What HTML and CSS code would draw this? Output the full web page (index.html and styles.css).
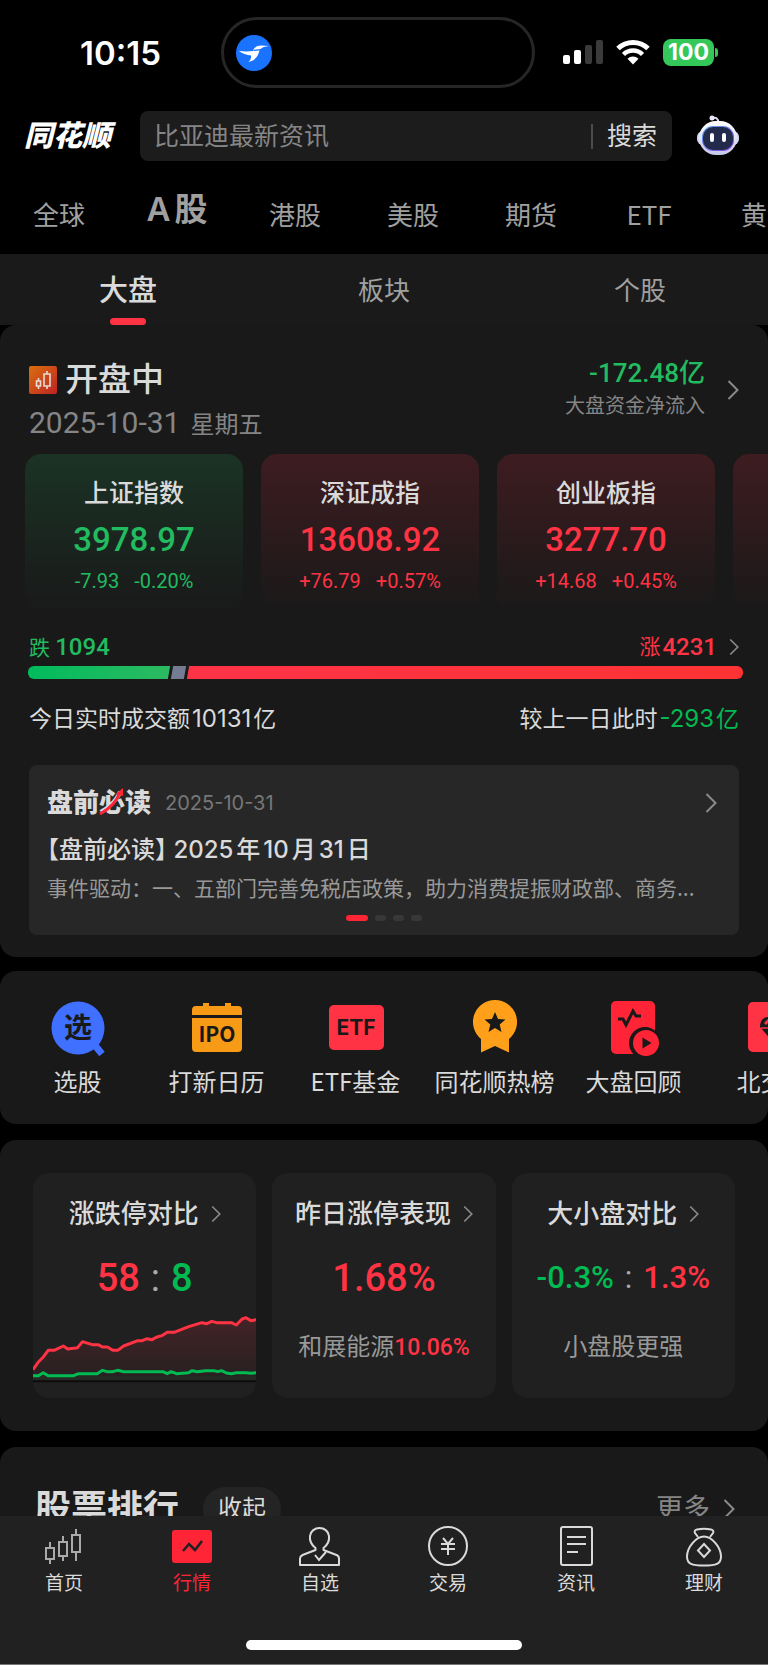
FILE: index.html
```
<!DOCTYPE html>
<html lang="zh-CN">
<head>
  <meta charset="UTF-8" />
  <meta name="viewport" content="width=device-width, initial-scale=1.0" />
  <title>同花顺 - 行情</title>
  <link rel="stylesheet" href="styles.css">
</head>
<body>
  <!-- shared chevron -->
  <svg class="defs" width="0" height="0" aria-hidden="true">
    <symbol id="chevron" viewBox="0 0 12 20">
      <path d="M1.5 1l9 9-9 9" fill="none" stroke="currentColor" stroke-width="2" />
    </symbol>
  </svg>

  <div class="app">
    <div class="status-bar">
      <div class="time">10:15</div>
      <div class="island">
        <svg width="36" height="36" viewBox="0 0 36 36">
          <circle cx="18" cy="18" r="18" fill="#1a73ff" />
          <path d="M3 16c5 .6 10 .6 14 0 1-3.500 4-5.500 8-5.500l8 .4c-4 .7-7 1.200-8.500 3.100l-6.500.8-.6 1.200 6.100-.4c-1.500 6-4 9.500-11 11.400 2-2 3-4 2.500-6.400C11 20 6 18.500 3 16z" fill="#fff" />
        </svg>
      </div>
      <div class="status-icons">
        <svg width="40" height="26" viewBox="0 0 40 26">
          <rect x="0" y="16" width="7" height="9" rx="2" fill="#fff" />
          <rect x="11" y="11" width="7" height="14" rx="2" fill="#fff" />
          <rect x="22" y="6" width="7" height="19" rx="2" fill="#3a3a3a" />
          <rect x="33" y="1" width="7" height="24" rx="2" fill="#3a3a3a" />
        </svg>
        <svg width="34" height="26" viewBox="0 0 34 26">
          <path d="M2 9.500a21.500 21.500 0 0 1 30 0" fill="none" stroke="#fff" stroke-width="5" />
          <path d="M7.500 15.500a13.500 13.500 0 0 1 19 0" fill="none" stroke="#fff" stroke-width="4.500" />
          <path d="M17 25.500l-5.500-5.700a8 8 0 0 1 11 0z" fill="#fff" />
        </svg>
        <div class="battery"><span>100</span></div>
      </div>
    </div>

    <header class="header">
      <h1 class="logo">同花顺</h1>
      <form class="search-box">
        <input type="text" placeholder="比亚迪最新资讯" aria-label="搜索" />
        <button type="button">搜索</button>
      </form>
      <button class="robot" aria-label="AI助手">
        <svg width="44" height="42" viewBox="0 0 44 42">
          <defs>
            <linearGradient id="head" x1="0" y1="0" x2="0" y2="1">
              <stop offset="0" stop-color="#fff" />
              <stop offset="1" stop-color="#c5c7ea" />
            </linearGradient>
            <linearGradient id="face" x1="0" y1="0" x2="1" y2="1">
              <stop offset="0" stop-color="#57a8e8" />
              <stop offset="1" stop-color="#8a3fe0" />
            </linearGradient>
          </defs>
          <path d="M16 3c4-1 6 0 6.500 5" fill="none" stroke="#dcdcf2" stroke-width="2" />
          <circle cx="16" cy="3" r="2.500" fill="#e8e8fa" />
          <rect x="1" y="16" width="42" height="14" rx="6" fill="#d7d8f2" />
          <rect x="3" y="6" width="38" height="34" rx="17" fill="url(#head)" />
          <rect x="6" y="11" width="32" height="25" rx="11" fill="url(#face)" />
          <rect x="7" y="12" width="30" height="23" rx="10" fill="#232b4d" />
          <rect x="14" y="18" width="4" height="9" rx="2" fill="#fff" />
          <rect x="26" y="18" width="4" height="9" rx="2" fill="#fff" />
        </svg>
      </button>
    </header>

    <nav class="market-tabs">
      <a href="#">全球</a>
      <a href="#" class="active">A股</a>
      <a href="#">港股</a>
      <a href="#">美股</a>
      <a href="#">期货</a>
      <a href="#">ETF</a>
      <a href="#">黄金</a>
    </nav>

    <main class="content">
      <nav class="sub-tabs">
        <a href="#" class="active">大盘</a>
        <a href="#">板块</a>
        <a href="#">个股</a>
      </nav>

      <section class="panel overview">
        <div class="overview-head">
          <div>
            <div class="market-state">
              <svg width="28" height="28" viewBox="0 0 28 28">
                <defs>
                  <linearGradient id="state" x1="0" y1="0" x2="1" y2="1">
                    <stop offset="0" stop-color="#d9700f" />
                    <stop offset="1" stop-color="#bf2323" />
                  </linearGradient>
                </defs>
                <rect width="28" height="28" rx="2" fill="url(#state)" />
                <path d="M9.500 12v3M9.500 20v3M7.500 15h4v5h-4zM18 5v3M18 20v3M15 8h6v12h-6z" fill="none" stroke="#e8dcd6" stroke-width="1.600" />
              </svg>
              <h2>开盘中</h2>
            </div>
            <div class="date"><span class="num">2025-10-31</span> 星期五</div>
          </div>
          <a href="#" class="flow">
            <span class="flow-text">
              <span class="flow-value down">-172.48亿</span>
              <span class="flow-label">大盘资金净流入</span>
            </span>
            <svg class="chevron"><use href="#chevron" /></svg>
          </a>
        </div>

        <div class="index-list">
          <a href="#" class="index-card down">
            <span class="index-name">上证指数</span>
            <span class="index-value">3978.97</span>
            <span class="index-change"><span>-7.93</span><span>-0.20%</span></span>
          </a>
          <a href="#" class="index-card up">
            <span class="index-name">深证成指</span>
            <span class="index-value">13608.92</span>
            <span class="index-change"><span>+76.79</span><span>+0.57%</span></span>
          </a>
          <a href="#" class="index-card up">
            <span class="index-name">创业板指</span>
            <span class="index-value">3277.70</span>
            <span class="index-change"><span>+14.68</span><span>+0.45%</span></span>
          </a>
          <a href="#" class="index-card up" aria-label="更多指数"></a>
        </div>

        <div class="breadth">
          <span class="down">跌 <b>1094</b></span>
          <a href="#" class="up">涨 <b>4231</b><svg class="chevron small"><use href="#chevron" /></svg></a>
        </div>
        <div class="breadth-bar">
          <span class="bar-down" style="flex-grow: 1094"></span>
          <span class="bar-flat" style="flex-grow: 100"></span>
          <span class="bar-up" style="flex-grow: 4231"></span>
        </div>
        <div class="turnover">
          <span>今日实时成交额<span class="latin">10131</span>亿</span>
          <span>较上一日此时<span class="down2"><span class="latin">-293</span>亿</span></span>
        </div>

        <article class="news">
          <div class="news-head">
            <h3 class="news-logo">盘前必读
              <svg width="28" height="28" viewBox="0 0 28 28">
                <path d="M1 26C10 21 18 13 21 4" fill="none" stroke="#ff2436" stroke-width="3" />
                <path d="M17 6l7-6v8z" fill="#ff2436" />
              </svg>
            </h3>
            <time class="latin">2025-10-31</time>
            <svg class="chevron"><use href="#chevron" /></svg>
          </div>
          <a href="#" class="news-title">【盘前必读】 2025年10月31日</a>
          <p class="news-desc">事件驱动：一、五部门完善免税店政策，助力消费提振财政部、商务...</p>
          <div class="dots"><i class="on"></i><i></i><i></i><i></i></div>
        </article>
      </section>

      <section class="panel shortcuts">
        <a href="#">
          <svg width="56" height="56" viewBox="0 0 56 56">
            <path d="M43 43l9 11" stroke="#3f70ff" stroke-width="7" />
            <circle cx="28" cy="28" r="26.500" fill="#3f70ff" />
            <text x="28" y="38" font-size="28" class="icon-text">选</text>
          </svg>
          选股
        </a>
        <a href="#">
          <svg width="56" height="56" viewBox="0 0 56 56">
            <path d="M7 6h7V3h6v3h16V3h6v3h7a4 4 0 0 1 4 4v5H3v-5a4 4 0 0 1 4-4zM3 18h50v30a4 4 0 0 1-4 4H7a4 4 0 0 1-4-4z" fill="#f79a16" />
            <text x="28" y="42" font-size="21" class="icon-text">IPO</text>
          </svg>
          打新日历
        </a>
        <a href="#">
          <svg width="56" height="56" viewBox="0 0 56 56">
            <rect x="1" y="5" width="55" height="45" rx="5" fill="#ff3344" />
            <text x="28" y="35" font-size="21" class="icon-text latin">ETF</text>
          </svg>
          ETF基金
        </a>
        <a href="#">
          <svg width="56" height="56" viewBox="0 0 56 56">
            <path d="M28 0a22 22 0 0 1 14 39v13.500L28 46l-14 6.500V39A22 22 0 0 1 28 0z" fill="#ff9f1a" />
            <path d="M28 12l3 7 7.500.6-5.800 5 1.800 7.400-6.500-4-6.500 4 1.800-7.400-5.800-5L25 19z" fill="#191919" />
          </svg>
          同花顺热榜
        </a>
        <a href="#">
          <svg width="56" height="56" viewBox="0 0 56 56">
            <rect x="5" y="1" width="44" height="53" rx="5" fill="#ff2436" />
            <path d="M12 19h5l3 6 7-14 3 5h5" fill="none" stroke="#191919" stroke-width="3" />
            <circle cx="39" cy="43" r="16" fill="#191919" />
            <circle cx="40" cy="43" r="13" fill="#ff2436" />
            <path d="M36.500 37.500l9 5.500-9 5.500z" fill="#191919" />
          </svg>
          大盘回顾
        </a>
        <a href="#">
          <svg width="56" height="56" viewBox="0 0 56 56">
            <rect x="3" y="2" width="50" height="50" rx="5" fill="#ff3344" />
            <path d="M15 27c0-6 3-10 8-10h10c5 0 8 4 8 10L28 42z" fill="#191919" />
            <path d="M16 28h24" stroke="#ff3344" stroke-width="1.500" />
            <path d="M20 24l4-4" stroke="#ff3344" stroke-width="3" />
          </svg>
          北交所
        </a>
      </section>

      <section class="panel stats">
        <a href="#" class="stat">
          <span class="stat-title">涨跌停对比<svg class="chevron small"><use href="#chevron" /></svg></span>
          <span class="stat-value"><b class="up">58</b><i>:</i><b class="down2">8</b></span>
          <svg class="chart" viewBox="67 520 456 213" preserveAspectRatio="none">
            <defs>
              <linearGradient id="area" x1="0" y1="0" x2="0" y2="1">
                <stop offset="0" stop-color="#ff3344" stop-opacity="0.160" />
                <stop offset="1" stop-color="#ff3344" stop-opacity="0.030" />
              </linearGradient>
            </defs>
            <path d="M67 693L78 670 88 655 98 635H110L129 622 138 631 158 627 168 609 188 618H200L209 625H219L230 635H240L252 622 281 606H290L300 600 310 603 320 595 330 591 341 581H355L385 564 412 552 422 555 432 548 442 552H472L482 559 494 541 502 537 512 546 523 543V726H67z" fill="url(#area)" />
            <path d="M67 711H523V726H67z" fill="#00c853" fill-opacity="0.060" />
            <path d="M67 728H523" stroke="#0c0c0c" stroke-width="2" vector-effect="non-scaling-stroke" />
            <path d="M67 693L78 670 88 655 98 635H110L129 622 138 631 158 627 168 609 188 618H200L209 625H219L230 635H240L252 622 281 606H290L300 600 310 603 320 595 330 591 341 581H355L385 564 412 552 422 555 432 548 442 552H472L482 559 494 541 502 537 512 546 523 543" class="line" stroke="#ff3344" />
            <path d="M67 711H78L88 702 98 711H150L160 705H198L209 695 218 699H230L240 695 252 699H332L341 705 349 699 360 705 385 702 392 696 402 699 420 696H436L444 699 452 696 462 703 472 705 482 702H502L512 704 523 702" class="line" stroke="#00bb52" />
          </svg>
        </a>
        <a href="#" class="stat">
          <span class="stat-title">昨日涨停表现<svg class="chevron small"><use href="#chevron" /></svg></span>
          <span class="stat-value"><b class="up">1.68%</b></span>
          <span class="stat-note">和展能源<b class="up">10.06%</b></span>
        </a>
        <a href="#" class="stat">
          <span class="stat-title">大小盘对比<svg class="chevron small"><use href="#chevron" /></svg></span>
          <span class="stat-value compact"><b class="down2">-0.3%</b><i>:</i><b class="up">1.3%</b></span>
          <span class="stat-note">小盘股更强</span>
        </a>
      </section>

      <section class="panel ranking">
        <h2>股票排行</h2>
        <button class="fold">收起</button>
        <a href="#">更多<svg class="chevron"><use href="#chevron" /></svg></a>
      </section>
    </main>

    <nav class="bottom-nav">
      <div class="nav-items">
        <a href="#">
          <svg width="42" height="42" viewBox="0 0 42 42">
            <path d="M7 17v6M7 34v5M3 23h8v11H3zM20 11v6M20 31v5M16 17h8v14h-8zM33 4v6M33 27v9M29 10h8v17h-8z" stroke="#aaa" stroke-width="2" />
          </svg>
          首页
        </a>
        <a href="#" class="active">
          <svg width="42" height="42" viewBox="0 0 42 42">
            <rect x="1" y="5" width="40" height="33" rx="3" fill="#ff2436" />
            <path d="M12 26l6-7 6 6 7-9" stroke="#212121" stroke-width="2.500" />
          </svg>
          行情
        </a>
        <a href="#">
          <svg width="42" height="42" viewBox="0 0 42 42">
            <path d="M16.500 23c-5-4-6-8-5.500-12C11.500 6 16 3 20.500 3S29.500 6 30 11c.5 4-.5 8-5.500 12v2l13 5c2 .8 2.500 2 2.500 3.500V40H1v-6.500C1 32 2 30.800 3.500 30l13-5z" stroke="#dadada" stroke-width="2" stroke-linejoin="round" />
            <path d="M16 30l4 5 7-8" stroke="#dadada" stroke-width="2" />
          </svg>
          自选
        </a>
        <a href="#">
          <svg width="42" height="42" viewBox="0 0 42 42">
            <circle cx="21" cy="21" r="19" stroke="#dadada" stroke-width="2" />
            <path d="M16 13l5 6 5-6M21 19v11M14 19h14M14 24h14" stroke="#dadada" stroke-width="2" />
          </svg>
          交易
        </a>
        <a href="#">
          <svg width="42" height="42" viewBox="0 0 42 42">
            <rect x="6" y="2" width="31" height="38" rx="2" stroke="#dadada" stroke-width="2" />
            <path d="M12 12h19M12 19h19M12 27h11" stroke="#dadada" stroke-width="2" />
          </svg>
          资讯
        </a>
        <a href="#">
          <svg width="42" height="42" viewBox="0 0 42 42">
            <path d="M15 12l-3-4c-1-2 0-3 2-3.500 5-1 9-1 14 0 2 .5 3 1.500 2 3.500l-3 4" stroke="#dadada" stroke-width="2" />
            <path d="M21 11.500c8 0 17 11 17 20C38 39 33 40.500 21 40.500S4 39 4 31.500c0-9 9-20 17-20z" stroke="#dadada" stroke-width="2" />
            <path d="M21 19l6 6.500-6 6.500-6-6.500z" stroke="#dadada" stroke-width="2" />
          </svg>
          理财
        </a>
      </div>
      <div class="home-indicator"></div>
    </nav>
  </div>
</body>
</html>
```
FILE: styles.css
```
* {
  box-sizing: border-box;
}
body {
  margin: 0;
  background: #000;
  color: #dadada;
  font-family: Roboto, "Noto Sans CJK SC", sans-serif;
}
h1, h2, h3, p {
  margin: 0;
}
a {
  color: inherit;
  text-decoration: none;
}
button {
  padding: 0;
  border: none;
  background: none;
  color: inherit;
  font-family: inherit;
  cursor: pointer;
}
b {
  font-weight: 500;
}
i {
  font-style: normal;
}
.defs {
  position: absolute;
}
.latin {
  font-family: Inter, "Noto Sans CJK SC", sans-serif;
}
.up {
  color: #ff3344;
}
.down {
  color: #22bb60;
}
.down2 {
  color: #00bb52;
}
.chevron {
  width: 12px;
  height: 20px;
  flex: none;
  color: #8a8a8a;
}
.chevron.small {
  width: 10px;
  height: 18px;
}
.app {
  display: flex;
  flex-direction: column;
  height: 100vh;
  overflow: hidden;
}

/* status bar */
.status-bar {
  display: flex;
  flex: none;
  height: 111px;
  padding-top: 17px;
}
.time {
  width: 221px;
  padding-left: 20px;
  line-height: 72px;
  text-align: center;
  font-family: Inter, sans-serif;
  font-size: 33px;
  font-weight: 600;
  color: #fff;
}
.island {
  display: flex;
  align-items: center;
  width: 314px;
  height: 71px;
  padding-left: 12px;
  border: 3px solid #262626;
  border-radius: 36px;
}
.status-icons {
  display: flex;
  align-items: center;
  gap: 13px;
  height: 70px;
  margin-left: 28px;
}
.battery {
  position: relative;
  width: 51px;
  height: 27px;
  border-radius: 8px;
  background: #34c759;
  color: #fff;
  font-family: Inter, sans-serif;
  font-size: 23px;
  font-weight: 700;
  line-height: 27px;
  text-align: center;
}
.battery::after {
  content: "";
  position: absolute;
  right: -4px;
  top: 9px;
  width: 3px;
  height: 9px;
  border-radius: 0 3px 3px 0;
  background: #34c759;
}

/* header */
.header {
  display: flex;
  flex: none;
  align-items: center;
  height: 50px;
  padding: 0 28px 0 24px;
}
.logo {
  width: 116px;
  font-size: 29px;
  font-weight: 900;
  font-style: italic;
  line-height: 50px;
  color: #fff;
}
.search-box {
  display: flex;
  flex: 1;
  align-items: center;
  height: 50px;
  margin-right: 24px;
  padding: 0 15px 0 14px;
  border-radius: 8px;
  background: #1c1c1c;
}
.search-box input {
  flex: 1;
  min-width: 0;
  padding: 0;
  border: none;
  outline: none;
  background: none;
  color: #dadada;
  font-family: inherit;
  font-size: 25px;
}
.search-box input::placeholder {
  color: #858585;
}
.search-box button {
  padding-left: 14px;
  border-left: 2px solid #4c4c4c;
  font-size: 25px;
  line-height: 25px;
}
.robot {
  width: 44px;
  height: 42px;
}
.robot svg {
  display: block;
}

/* tabs */
.market-tabs {
  display: flex;
  flex: none;
  align-items: flex-end;
  height: 93px;
  padding-bottom: 22px;
  overflow: hidden;
}
.market-tabs a {
  flex: none;
  width: 118px;
  text-align: center;
  font-family: "Noto Sans CJK SC", sans-serif;
  font-size: 26px;
  line-height: 36px;
  color: #a0a0a0;
}
.market-tabs a.active {
  font-family: Inter, "Noto Sans CJK SC", sans-serif;
  font-size: 33px;
  font-weight: 600;
  line-height: 46px;
  text-autospace: normal;
}
.content {
  flex: 1;
  min-height: 0;
  overflow: hidden;
}
.sub-tabs {
  display: flex;
  padding-top: 3px;
  background: #1a1a1a;
}
.sub-tabs a {
  position: relative;
  flex: 1;
  text-align: center;
  font-size: 26px;
  line-height: 68px;
  color: #a0a0a0;
}
.sub-tabs a.active {
  font-size: 29px;
  font-weight: 500;
  color: #dadada;
}
.sub-tabs a.active::after {
  content: "";
  position: absolute;
  left: calc(50% - 18px);
  bottom: 0;
  width: 36px;
  height: 7px;
  border-radius: 4px;
  background: #ff3344;
}

.panel {
  margin-bottom: 16px;
  border-radius: 16px;
  background: #191919;
}

/* market overview */
.overview {
  margin-bottom: 14px;
  padding: 33px 29px 22px;
}
.overview-head {
  display: flex;
  justify-content: space-between;
  align-items: flex-start;
}
.market-state {
  display: flex;
  align-items: center;
  gap: 8px;
  height: 44px;
}
.market-state h2 {
  font-size: 33px;
  font-weight: 500;
  line-height: 44px;
}
.date {
  height: 32px;
  margin-top: 5px;
  font-size: 24px;
  line-height: 32px;
  color: #858585;
}
.date .num {
  margin-right: 4px;
  font-size: 30px;
}
.flow {
  display: flex;
  align-items: center;
  gap: 22px;
}
.flow-text {
  text-align: right;
}
.flow-value {
  display: block;
  font-size: 26px;
  font-weight: 500;
  line-height: 30px;
}
.flow-label {
  display: block;
  margin-top: 2px;
  font-size: 20px;
  line-height: 32px;
  color: #858585;
}
.index-list {
  display: flex;
  gap: 18px;
  margin: 15px -29px 0 -4px;
  overflow: hidden;
}
.index-card {
  display: flex;
  flex: none;
  flex-direction: column;
  align-items: center;
  width: 218px;
  height: 158px;
  padding-top: 22px;
  border-radius: 16px;
}
.index-card.down {
  background: linear-gradient(#1b3325, #191919);
}
.index-card.up {
  background: linear-gradient(#3e1c20, #191919);
}
.index-name {
  font-size: 25px;
  font-weight: 500;
  line-height: 36px;
  color: #dadada;
}
.index-value {
  margin-top: 6px;
  font-size: 33px;
  font-weight: 500;
  line-height: 44px;
}
.index-change {
  display: flex;
  gap: 15px;
  margin-top: 5px;
  font-size: 20px;
  line-height: 28px;
}
.breadth {
  display: flex;
  justify-content: space-between;
  height: 32px;
  margin-top: 19px;
  font-size: 21px;
  line-height: 32px;
}
.breadth b {
  font-size: 24px;
}
.breadth a {
  display: flex;
  align-items: center;
  gap: 2px;
}
.breadth .chevron {
  margin-left: 10px;
}
.breadth-bar {
  display: flex;
  gap: 3px;
  height: 13px;
  margin: 3px -4px 0 -1px;
  border-radius: 6px;
  overflow: hidden;
}
.breadth-bar span {
  flex-basis: 0;
  transform: skewX(-10deg);
}
.bar-down {
  margin-left: -4px;
  background: linear-gradient(90deg, #00bb5c, #2cba62);
}
.bar-flat {
  background: #747c93;
}
.bar-up {
  margin-right: -4px;
  background: linear-gradient(90deg, #ff3347, #ff3333);
}
.turnover {
  display: flex;
  justify-content: space-between;
  height: 32px;
  margin-top: 24px;
  font-size: 23px;
  line-height: 32px;
}
.turnover .latin {
  padding: 0 2px;
  font-size: 24px;
}

/* news card */
.news {
  padding: 22px 18px 14px;
  margin-top: 30px;
  border-radius: 8px;
  background: #272727;
}
.news-head {
  display: flex;
  align-items: center;
  height: 32px;
  padding-right: 4px;
}
.news-logo {
  position: relative;
  font-size: 26px;
  font-weight: 900;
  line-height: 32px;
}
.news-logo svg {
  position: absolute;
  left: 50%;
  top: 1px;
}
.news-head time {
  flex: 1;
  margin-left: 14px;
  font-size: 20px;
  color: #777;
}
.news-title {
  display: block;
  height: 32px;
  margin-top: 15px;
  font-family: Inter, "Noto Sans CJK SC", sans-serif;
  font-size: 24px;
  font-weight: 500;
  line-height: 32px;
  font-feature-settings: "halt";
  text-autospace: normal;
}
.news-desc {
  margin-top: 5px;
  overflow: hidden;
  text-overflow: ellipsis;
  white-space: nowrap;
  font-family: "Noto Sans CJK SC", sans-serif;
  font-size: 21px;
  line-height: 32px;
  color: #999;
}
.dots {
  display: flex;
  justify-content: center;
  gap: 7px;
  margin-top: 12px;
}
.dots i {
  width: 11px;
  height: 6px;
  border-radius: 3px;
  background: #383838;
}
.dots i.on {
  width: 22px;
  background: #ff2436;
}

/* shortcuts */
.shortcuts {
  display: flex;
  padding: 29px 0 27px 8px;
  overflow: hidden;
}
.shortcuts a {
  display: flex;
  flex: none;
  flex-direction: column;
  align-items: center;
  gap: 9px;
  width: 139px;
  font-family: "Noto Sans CJK SC", sans-serif;
  font-size: 24px;
  line-height: 32px;
}
.icon-text {
  fill: #191919;
  font-weight: 700;
  text-anchor: middle;
}

/* stat cards */
.stats {
  display: grid;
  grid-template-columns: repeat(3, 1fr);
  gap: 16px;
  padding: 33px;
}
.stat {
  display: flex;
  flex-direction: column;
  align-items: center;
  height: 225px;
  padding-top: 23px;
  border-radius: 16px;
  background: #202020;
}
.stat-title {
  display: flex;
  align-items: center;
  gap: 12px;
  font-size: 26px;
  font-weight: 500;
  line-height: 36px;
  white-space: nowrap;
}
.stat-value {
  display: flex;
  gap: 11px;
  margin-top: 22px;
  font-size: 38px;
  line-height: 48px;
}
.stat-value i {
  color: #aaa;
}
.stat-value.compact {
  font-size: 31px;
}
.stat-note {
  margin-top: 29px;
  font-size: 24px;
  line-height: 32px;
  color: #999;
}
.stat-note b {
  font-size: 23px;
}
.chart {
  width: 100%;
  height: 71px;
  margin-top: 10px;
}
.line {
  fill: none;
  stroke-width: 3;
  stroke-linejoin: round;
  vector-effect: non-scaling-stroke;
}

/* ranking */
.ranking {
  display: flex;
  align-items: center;
  margin: 0;
  padding: 40px 33px 40px 35px;
}
.ranking h2 {
  font-size: 36px;
  font-weight: 700;
  line-height: 44px;
}
.fold {
  height: 44px;
  margin-left: 24px;
  padding: 0 15px;
  border-radius: 22px;
  background: #242424;
  font-size: 24px;
  line-height: 40px;
}
.ranking a {
  display: flex;
  align-items: center;
  gap: 13px;
  margin-left: auto;
  font-size: 27px;
  line-height: 40px;
  color: #858585;
}

/* bottom nav */
.bottom-nav {
  flex: none;
  padding: 9px 0 14px;
  border-bottom: 1px solid #777;
  background: #212121;
}
.nav-items {
  display: flex;
}
.nav-items a {
  display: flex;
  flex: 1;
  flex-direction: column;
  align-items: center;
  gap: 3px;
  font-size: 19px;
  line-height: 28px;
}
.nav-items a.active {
  color: #ff2436;
}
.nav-items svg {
  fill: none;
}
.home-indicator {
  width: 36%;
  height: 10px;
  margin: 42px auto 0;
  border-radius: 5px;
  background: #fff;
}
```
